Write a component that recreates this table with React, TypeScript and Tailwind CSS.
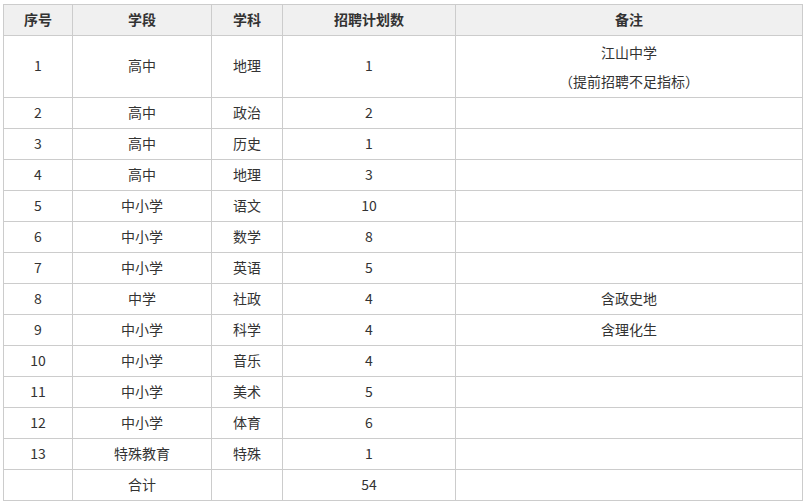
const rows: [string, string, string, string, string][] = [
  ['2', '高中', '政治', '2', ''],
  ['3', '高中', '历史', '1', ''],
  ['4', '高中', '地理', '3', ''],
  ['5', '中小学', '语文', '10', ''],
  ['6', '中小学', '数学', '8', ''],
  ['7', '中小学', '英语', '5', ''],
  ['8', '中学', '社政', '4', '含政史地'],
  ['9', '中小学', '科学', '4', '含理化生'],
  ['10', '中小学', '音乐', '4', ''],
  ['11', '中小学', '美术', '5', ''],
  ['12', '中小学', '体育', '6', ''],
  ['13', '特殊教育', '特殊', '1', ''],
  ['', '合计', '', '54', ''],
];

const cell = 'border border-[#cccccc] text-center align-middle p-0 pb-[2px]';

export default function App() {
  return (
    <div
      className="bg-white pt-[4px] pl-[3px] text-[14px] text-[#333333]"
      style={{ fontFamily: '"Noto Sans CJK SC", "Noto Sans", sans-serif' }}
    >
      <table className="table-fixed border-collapse w-[799px]">
        <colgroup>
          <col className="w-[69px]" />
          <col className="w-[139px]" />
          <col className="w-[71px]" />
          <col className="w-[173px]" />
          <col className="w-[347px]" />
        </colgroup>
        <thead>
          <tr className="h-[31px] bg-[#f0f0f0] font-bold">
            <th className={cell}>序号</th>
            <th className={cell}>学段</th>
            <th className={cell}>学科</th>
            <th className={cell}>招聘计划数</th>
            <th className={cell}>备注</th>
          </tr>
        </thead>
        <tbody>
          <tr className="h-[62px]">
            <td className={cell}>1</td>
            <td className={cell}>高中</td>
            <td className={cell}>地理</td>
            <td className={cell}>1</td>
            <td className="border border-[#cccccc] text-center align-middle p-0">
              <p className="leading-[29px]">江山中学</p>
              <p className="leading-[29px]">
                <span className="inline-block w-[14px] text-left">（</span>
                提前招聘不足指标
                <span className="inline-block w-[14px] text-right">）</span>
              </p>
            </td>
          </tr>
          {rows.map((r, i) => (
            <tr key={i} className="h-[31px]">
              {r.map((c, j) => (
                <td key={j} className={cell}>
                  {c}
                </td>
              ))}
            </tr>
          ))}
        </tbody>
      </table>
    </div>
  );
}
